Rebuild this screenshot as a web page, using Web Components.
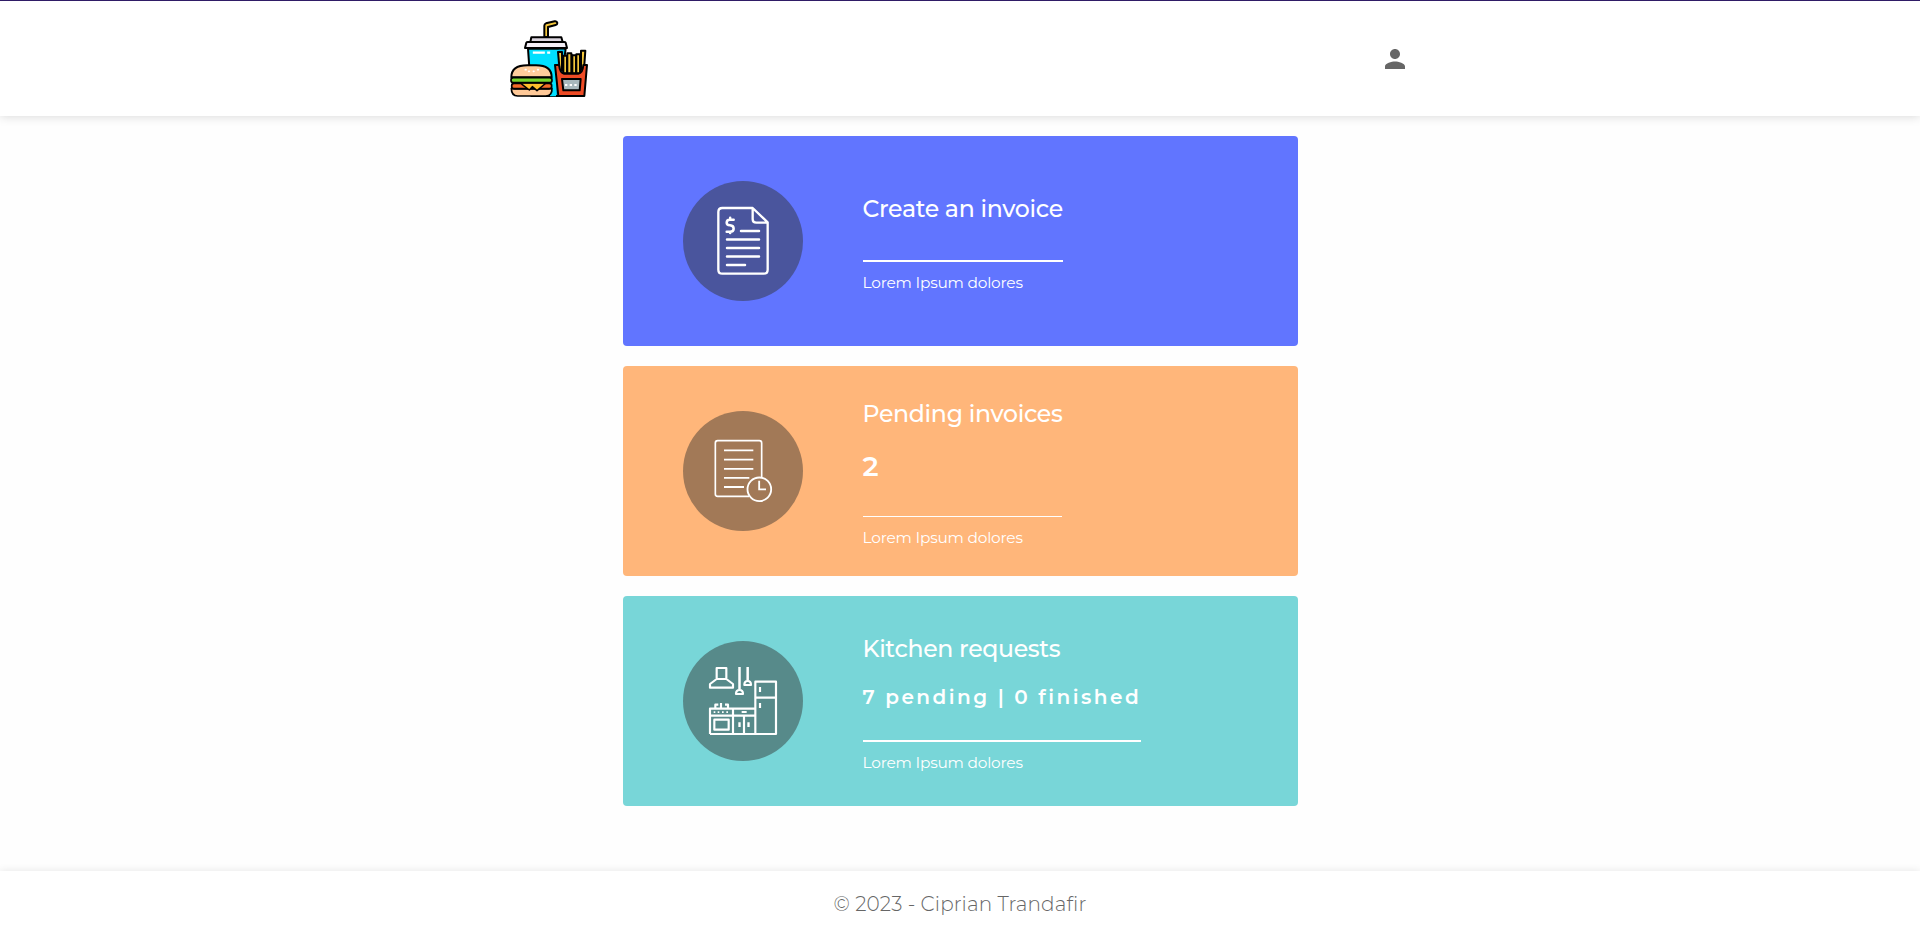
<!DOCTYPE html>
<html lang="en">
<head>
<meta charset="utf-8">
<title>Invoices</title>
<style>
html,body{margin:0;height:100%}
body{font-family:Montserrat,Inter,"Open Sans",sans-serif;background:#fefefe;overflow:hidden}
</style>
</head>
<body>
<app-shell>
  <site-header slot="header"></site-header>
  <action-card style="--bg:#6175ff;--disc:#4a559d;--top:58px;--line-gap:36px;--rule:2px;--w:200px">
    <invoice-icon slot="icon"></invoice-icon>
    <span slot="title">Create an invoice</span>
    <span slot="note">Lorem Ipsum dolores</span>
  </action-card>
  <action-card style="--bg:#ffb67a;--disc:#a27957;--top:33px;--line-gap:33px;--rule:1px;--w:199px;--vgap:20px;--vh:34px;--vs:27.6px">
    <pending-icon slot="icon"></pending-icon>
    <span slot="title">Pending invoices</span>
    <span slot="value">2</span>
    <span slot="note">Lorem Ipsum dolores</span>
  </action-card>
  <action-card style="--bg:#78d6d8;--disc:#578a8a;--top:38px;--line-gap:31px;--rule:2px;--w:278px;--vgap:21px;--vh:24px;--vs:20px;--vls:2.5px">
    <kitchen-icon slot="icon"></kitchen-icon>
    <span slot="title">Kitchen requests</span>
    <span slot="value">7 pending | 0 finished</span>
    <span slot="note">Lorem Ipsum dolores</span>
  </action-card>
  <site-footer slot="footer">© 2023 - Ciprian Trandafir</site-footer>
</app-shell>
<script>
const define = (name, html) => customElements.define(name, class extends HTMLElement {
  constructor() {
    super();
    this.attachShadow({mode: 'open'}).innerHTML = html;
  }
});

define('app-shell', `<style>
:host{display:flex;flex-direction:column;height:100vh}
main{flex:1;display:flex;flex-direction:column;align-items:center;gap:20px;padding-top:20px}
</style><slot name="header"></slot><main><slot></slot></main><slot name="footer"></slot>`);

define('site-header', `<style>
:host{display:block;box-sizing:border-box;height:116px;border-top:1px solid #2f1c66;background:#fff;box-shadow:0 0 10px rgba(0,0,0,.17)}
nav{width:900px;height:115px;margin:auto;display:flex;justify-content:space-between;align-items:center}
</style><nav><food-logo></food-logo><user-icon></user-icon></nav>`);

define('user-icon', `<style>:host,svg{display:block}</style>
<svg width="30" height="30" viewBox="0 0 24 24" fill="#666"><path d="M12 12c2.21 0 4-1.79 4-4s-1.79-4-4-4-4 1.79-4 4 1.79 4 4 4zm0 2c-2.67 0-8 1.34-8 4v2h16v-2c0-2.66-5.33-4-8-4z"/></svg>`);

define('food-logo', `<style>:host,svg{display:block}</style>
<svg width="80" height="80" viewBox="30 27 240 240" stroke="#000" stroke-width="6" stroke-linejoin="round" stroke-linecap="round">
<path d="M84 116L94 258H178L197 116Z" fill="#00e0ff"/><path d="M176 119h16l-10 136h-18z" fill="#00b9e6" stroke="none"/><path d="M150 259V200L168 185V259Z" fill="#00e0ff" stroke="none"/>
<path d="M133 81V47Q133 42 138 40L164 34Q171 33 172 39Q172 44 167 45L144 51V81Z" fill="#f5c83c"/>
<path d="M91 96L94 82H184L188 96Z" fill="#dcd6df"/>
<path d="M75 114L79 98Q80 96 84 96H192Q196 96 197 98L201 114Z" fill="#f4eff7"/>
<path d="M102 128H131M145 128H147" stroke="#fff" stroke-width="7" stroke-linecap="square"/>
<g fill="#f5c83c"><path d="M174 126H186V180H179ZM190 137H201V190H190ZM202 130H214V190H202ZM217 136H228V190H217ZM229 133H240V190H229ZM243 122H256L252 178H243Z"/></g>
<path d="M165 165H177Q180 190 192 191H235Q248 190 250 165H261L253 258H175Z" fill="#ee4b25"/>
<path d="M186 207H242L239 241H190Z" fill="#a9b9be"/>
<path d="M198 225h1M212 225h1M226 225h1" stroke="#fff" stroke-width="6" stroke-linecap="square"/>
<path d="M34 235Q38 237 44 237H146Q152 237 156 235Q157 258 137 258H53Q34 258 34 235Z" fill="#ffc998" stroke-width="5"/>
<rect x="35" y="220" width="120" height="16" rx="7" fill="#f26a28" stroke-width="5"/>
<path d="M62 219H138L111 242L97 230L88 240L66 223Z" fill="#ffbe2e" stroke-width="4.500"/>
<path d="M34 202Q34 166 82 166H108Q155 166 155 202Z" fill="#ffcd9c"/>
<path d="M76 179h2M86 184h2M100 184h2M113 179h2" stroke="#fff" stroke-width="5"/>
<rect x="33" y="203" width="123" height="15" rx="7" fill="#77d52d" stroke-width="5"/>
</svg>`);

const disc = (inner, width) => `<style>:host,svg{display:block}</style>
<svg width="120" height="120" viewBox="39 33 360 360" fill="none" stroke="#fff" stroke-width="${width}" stroke-linejoin="round">${inner}</svg>`;

define('invoice-icon', disc(`
<path d="M248 114H157Q145 114 145 126V299Q145 311 157 311H281Q293 311 293 299V157ZM248 114V148Q248 158 259 158H292"/>
<path d="M213 183H267M171 208.500H267M171 234H267M171 259.500H267M171 285H225" stroke-width="7.500" stroke-linecap="round"/>
<path d="M191 149H179Q170 149 170 158Q170 165 180 166Q191 167 191 176Q191 185 180 185H170M180.500 143V149M180.500 185V189" stroke-width="7.500" stroke-linecap="round"/>`, 7));

define('pending-icon', disc(`
<path d="M237 289H143Q136 289 136 282V129Q136 122 143 122H268Q275 122 275 129V232" stroke-width="5"/>
<path d="M162 151H250M162 179H250M162 206.500H250M162 233.500H238M162 261H222" stroke-width="5.500"/>
<circle cx="268" cy="268" r="35.500"/><path d="M267.500 242V268H288" stroke-linejoin="miter"/>`, 5.5));

define('kitchen-icon', disc(`
<path d="M140 147V114H169V147M140 147L120 162V173H189V162L169 147Z"/>
<path d="M208.500 111V178M233 111V151" stroke-width="7.500"/>
<path d="M198 192Q198 180 208.500 180Q219 180 219 192ZM223 165Q223 153 233 153Q243 153 243 165Z"/>
<path d="M256 155H318V312H256ZM256 203H318"/><path d="M270 171V186M270 219V234"/>
<path d="M120 312V236H255M120 312H256M189 236V312M120 257H255M222 257V312"/>
<rect x="133" y="269" width="43" height="30"/>
<path d="M136 236V224H145M153 219V236M174 236V224H165"/>
<path d="M131 246.500h5M143 246.500h5M156 246.500h5M169 246.500h5M215 246h15" stroke-width="5.500"/>
<path d="M208.500 277V291M235.500 277V291" stroke-width="7"/>`, 6.5));

define('action-card', `<style>
:host{display:flex;box-sizing:border-box;width:675px;height:210px;padding-left:60px;gap:60px;border-radius:4px;background:var(--bg);color:#fff}
.disc{align-self:center;width:120px;height:120px;border-radius:50%;background:var(--disc)}
.body{padding-top:var(--top);white-space:nowrap}
.title{height:30px;font-size:23.6px;line-height:29px;font-weight:500;letter-spacing:-.31px}
.value{margin-top:var(--vgap,0);height:var(--vh,0);line-height:var(--vh,0);font-size:var(--vs,20px);font-weight:600;letter-spacing:var(--vls,0)}
.rule{margin-top:var(--line-gap);width:var(--w);height:var(--rule);background:#fff}
.note{margin-top:11px;height:19px;line-height:19px;font-size:15.4px;letter-spacing:-.21px}
</style><div class="disc"><slot name="icon"></slot></div>
<div class="body"><div class="title"><slot name="title"></slot></div><div class="value"><slot name="value"></slot></div><div class="rule"></div><div class="note"><slot name="note"></slot></div></div>`);

define('site-footer', `<style>
:host{display:flex;box-sizing:border-box;height:65px;justify-content:center;padding-top:19px;background:#fff;box-shadow:0 0 8px rgba(0,0,0,.1);color:#666;font-size:20px;letter-spacing:.1px;line-height:28px;font-weight:300}
</style><slot></slot>`);
</script>
</body>
</html>
